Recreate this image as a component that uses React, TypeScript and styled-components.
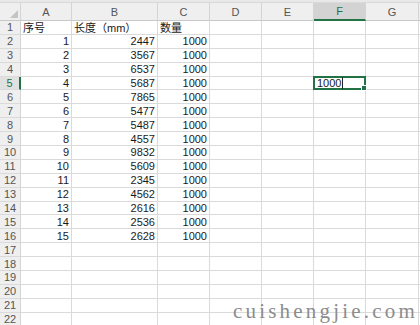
import styled, { createGlobalStyle, css } from 'styled-components';

const GlobalStyle = createGlobalStyle`
  html, body {
    margin: 0;
    padding: 0;
    background: #ffffff;
    overflow: hidden;
  }
`;

const COLS = ['A', 'B', 'C', 'D', 'E', 'F', 'G'];

const data: [number, number][] = [
  [1, 2447], [2, 3567], [3, 6537], [4, 5687], [5, 7865],
  [6, 5477], [7, 5487], [8, 4557], [9, 9832], [10, 5609],
  [11, 2345], [12, 4562], [13, 2616], [14, 2536], [15, 2628],
];

const Page = styled.div`
  position: relative;
  width: 420px;
  height: 325px;
  overflow: hidden;
  font-family: "Liberation Sans", "Noto Sans CJK SC", sans-serif;
  font-size: 11px;
  color: #1a1a1a;
`;

const Grid = styled.div`
  display: grid;
  grid-template-columns: 21px 51px 86px 52px 52px 52px 52px 53px 1fr;
  grid-template-rows: 3px 18px;
  grid-auto-rows: 13.9px;
`;

const TopStrip = styled.div`
  grid-column: 1 / -1;
  background: #e8e8e8;
  border-bottom: 1px solid #d9d9d9;
`;

const Corner = styled.div`
  position: relative;
  background: #efefef;
  border-right: 1px solid #d4d4d4;
  border-bottom: 1px solid #c8c8c8;

  &::after {
    content: '';
    position: absolute;
    right: 2px;
    bottom: 2px;
    border-style: solid;
    border-width: 0 0 8px 8px;
    border-color: transparent transparent #c4c4c4 transparent;
  }
`;

const ColHead = styled.div<{ $active?: boolean }>`
  display: flex;
  align-items: center;
  justify-content: center;
  background: #efefef;
  color: #555;
  border-right: 1px solid #d4d4d4;
  border-bottom: 1px solid #c8c8c8;
  font-size: 11px;
  ${(p) =>
    p.$active &&
    css`
      background: #d3d3d3;
      color: #217346;
      border-bottom: 2px solid #217346;
    `}
`;

const RowHead = styled.div<{ $active?: boolean }>`
  display: flex;
  align-items: center;
  justify-content: center;
  background: #efefef;
  color: #555;
  border-right: 1px solid #d4d4d4;
  border-bottom: 1px solid #dadada;
  font-size: 11px;
  ${(p) =>
    p.$active &&
    css`
      background: #e1e1e1;
      color: #217346;
      border-right: 2px solid #217346;
    `}
`;

const Cell = styled.div<{ $num?: boolean }>`
  display: flex;
  align-items: center;
  justify-content: ${(p) => (p.$num ? 'flex-end' : 'flex-start')};
  padding: 0 2px;
  border-right: 1px solid #dadada;
  border-bottom: 1px solid #dadada;
  white-space: nowrap;
  overflow: visible;
  min-width: 0;
`;

const ActiveCell = styled.div`
  position: relative;
  display: flex;
  align-items: center;
  margin: -1px 0 0 -1px;
  padding: 0 2px;
  border: 2px solid #217346;
  color: #1a1a1a;

  &::after {
    content: '';
    position: absolute;
    right: -3px;
    bottom: -3px;
    width: 4px;
    height: 4px;
    background: #217346;
    border: 1px solid #fff;
  }
`;

const Caret = styled.span`
  display: inline-block;
  width: 1px;
  height: 12px;
  background: #222;
  margin-left: 1px;
`;

const Watermark = styled.div`
  position: absolute;
  right: 2px;
  bottom: 1px;
  font-family: "Liberation Serif", serif;
  font-size: 21px;
  color: #8c8c8c;
  letter-spacing: 3.2px;
`;

export default function App() {
  const rows = Array.from({ length: 22 }, (_, i) => i + 1);

  const renderRow = (r: number) => {
    const cells: React.ReactNode[] = [];
    const d = r >= 2 && r <= 16 ? data[r - 2] : null;
    cells.push(
      <RowHead key="h" $active={r === 5}>
        {r}
      </RowHead>
    );
    COLS.forEach((c) => {
      let content: React.ReactNode = null;
      let num = false;
      if (r === 1) {
        if (c === 'A') content = '序号';
        if (c === 'B') content = '长度（mm）';
        if (c === 'C') content = '数量';
      } else if (d) {
        num = true;
        if (c === 'A') content = d[0];
        if (c === 'B') content = d[1];
        if (c === 'C') content = 1000;
      }
      if (r === 5 && c === 'F') {
        cells.push(
          <ActiveCell key={c}>
            1000
            <Caret />
          </ActiveCell>
        );
      } else {
        cells.push(
          <Cell key={c} $num={num}>
            {content}
          </Cell>
        );
      }
    });
    cells.push(<Cell key="rest" />);
    return cells;
  };

  return (
    <>
      <GlobalStyle />
      <Page>
        <Grid>
          <TopStrip />
          <Corner />
          {COLS.map((c) => (
            <ColHead key={c} $active={c === 'F'}>
              {c}
            </ColHead>
          ))}
          <ColHead />
          {rows.map((r) => renderRow(r))}
        </Grid>
        <Watermark>cuishengjie.com</Watermark>
      </Page>
    </>
  );
}
